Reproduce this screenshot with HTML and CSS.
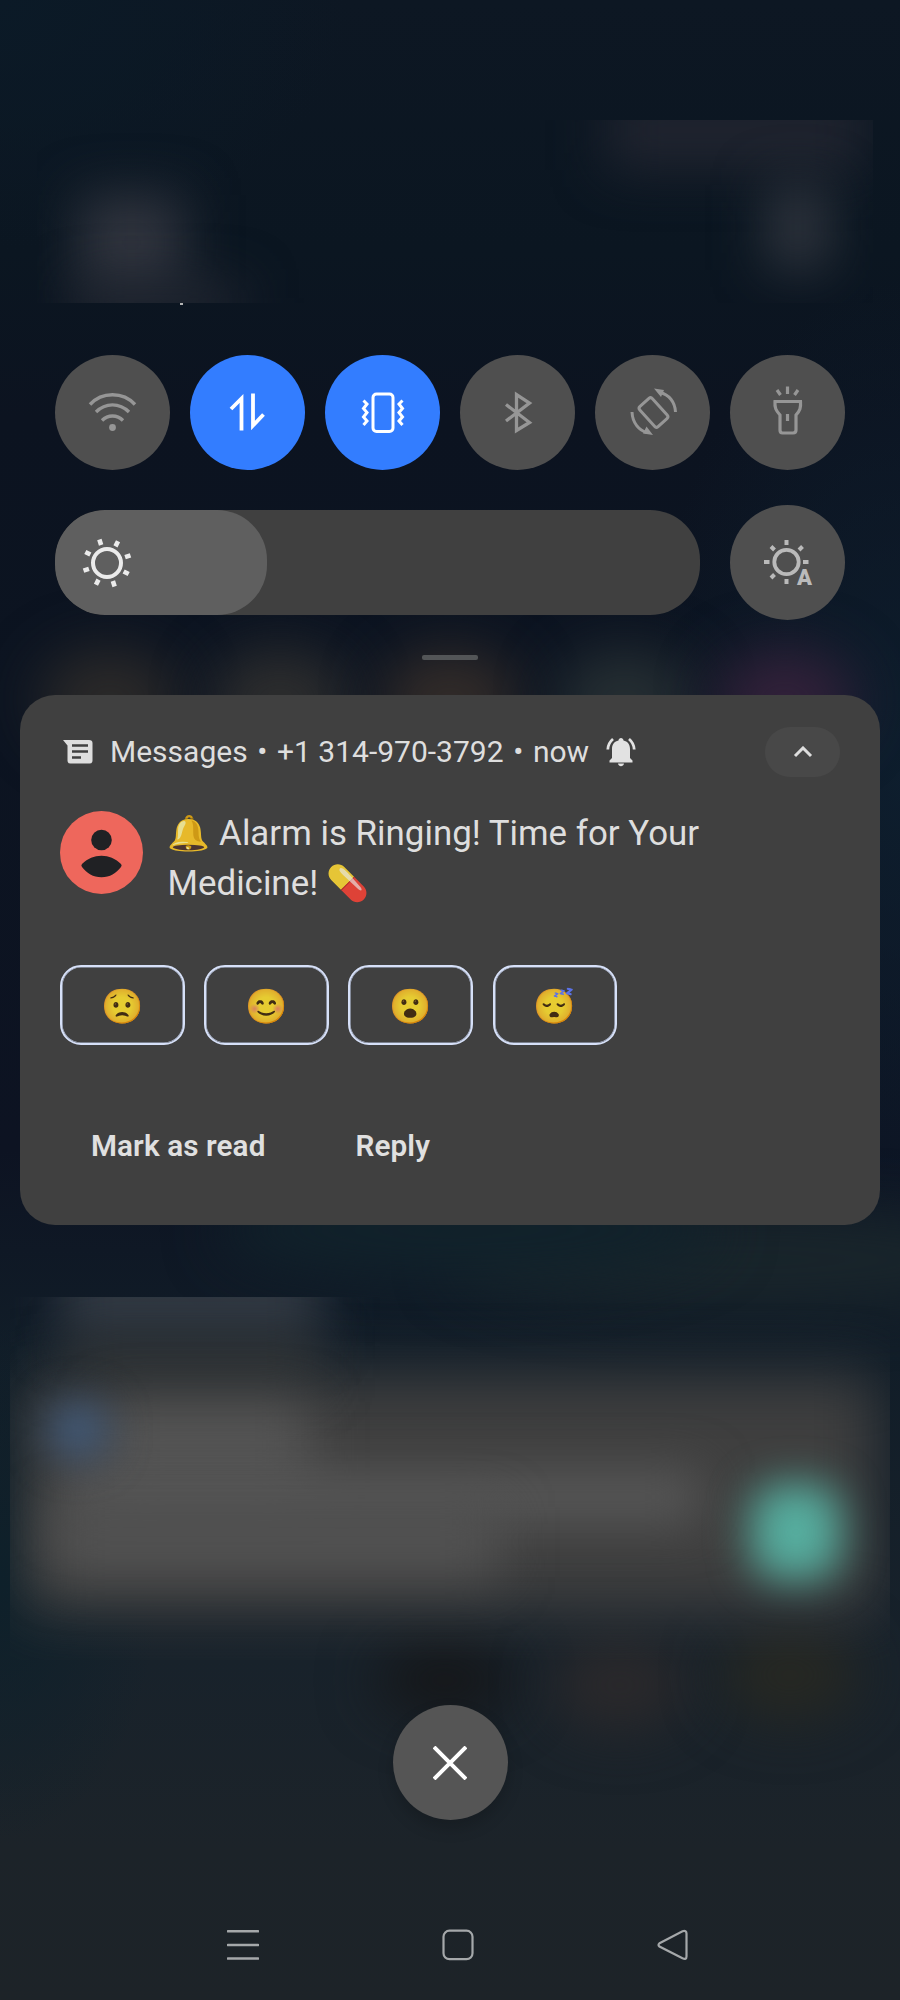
FILE: index.html
```html
<!DOCTYPE html>
<html lang="en">
<head>
<meta charset="utf-8">
<title>Notification shade</title>
<link rel="stylesheet" href="styles.css">
</head>
<body>
<div class="wallpaper">
  <i class="glow glow-a"></i><i class="glow glow-b"></i><i class="glow glow-c"></i><i class="glow glow-d"></i><i class="glow glow-e"></i>
  <i class="glow glow-f"></i><i class="glow glow-g"></i><i class="glow glow-h"></i><i class="glow glow-i"></i><i class="glow glow-j"></i>
  <div class="haze haze-top"><i class="clock"></i><i class="date"></i><i class="status"></i><i class="gear"></i></div>
  <i class="speck"></i>
  <div class="haze haze-bottom">
    <i class="sheet"></i><i class="heading"></i><i class="dim"></i><i class="app"></i><i class="title"></i><i class="line-one"></i><i class="line-two"></i><i class="teal"></i>
  </div>
</div>
<main class="screen">
  <section class="tiles">
    <div class="tile"><svg viewBox="0 0 115 115" fill="none" stroke="#969696" stroke-width="3.4"><path d="M35 49.5C47 36.5 68 36.5 80 49.5M41 57C50.500 47.500 64.500 47.500 74 57M47 65.500C53 59.500 62 59.500 68 65.500"/><circle cx="57.500" cy="72.500" r="3.400" fill="#969696" stroke="none"/></svg></div>
    <div class="tile on"><svg viewBox="0 0 115 115" fill="none" stroke="#fff" stroke-width="3.8"><path d="M41 54L51.500 43.500V75.500M63 38.500V70.500L73.500 59.500"/></svg></div>
    <div class="tile on"><svg viewBox="0 0 115 115" fill="none" stroke="#fff" stroke-width="3"><rect x="48" y="39" width="20" height="37.500" rx="3.500"/><path d="M38.500 45.500L42 49L38.500 53.500L42 57.500L38.500 62L42 66L38.500 70M77.500 45.500L74 49L77.500 53.500L74 57.500L77.500 62L74 66L77.500 70"/></svg></div>
    <div class="tile"><svg viewBox="0 0 115 115" fill="none" stroke="#969696" stroke-width="3.300"><path d="M46 49.500L69.500 67.500L56.500 75.500V39.500L69.500 48L46 66"/></svg></div>
    <div class="tile"><svg viewBox="0 0 115 115" fill="none" stroke="#969696" stroke-width="3"><rect x="50" y="44" width="17" height="27" rx="2.500" transform="rotate(-42 58.500 57.500)"/><path d="M65 37.500C74 39.500 80 47 80.500 57M37 57C37.500 68 44 75.500 52 77.500"/><path d="M59 33.500L69 35L66 42ZM58 80L48 78.500L51.500 71.500Z" fill="#969696" stroke="none"/></svg></div>
    <div class="tile"><svg viewBox="0 0 115 115" fill="none" stroke="#969696" stroke-width="3.200"><path d="M45 46.500H70.500C71 53 70 55.500 66 60V75Q66 78 63 78H52.500Q50 78 50 75V60C46 55.500 44.500 53 45 46.500ZM57.500 59V66M57.500 31.500V39M47 35L50.500 40M68 35L64.500 40"/></svg></div>
  </section>
  <section class="brightness">
    <div class="slider"><div class="level">
      <svg viewBox="0 0 50 50" fill="none" stroke="#ebebeb"><circle cx="25" cy="25" r="14" stroke-width="4"/><g stroke-width="4.600" transform="rotate(-18 25 25)"><path d="M25 .3V6M25 44V49.700M.3 25H6M44 25H49.700M7.800 7.800L11.800 11.800M38.200 38.200L42.200 42.200M7.800 42.200L11.800 38.200M38.200 11.800L42.200 7.800"/></g></svg>
    </div></div>
    <div class="tile"><svg viewBox="0 0 115 115" fill="none" stroke="#bababa"><circle cx="56.500" cy="57" r="12.200" stroke-width="3.800"/><path stroke-width="4" d="M56.500 35V40M56.500 74V79M34 57H39.500M73 57H78.500M41 41.500L44.500 45M72.500 41.500L69 45M41 73L44.500 69.500"/></svg><span class="auto">A</span></div>
  </section>
  <div class="handle"></div>
  <article class="card">
    <header class="card-head">
      <svg class="app-icon" viewBox="0 0 30 24"><path d="M0 0H26Q29.500 0 29.500 3V20.500Q29.500 23.500 26.500 23.500H7.500Q4.500 23.500 4.500 20.500V5.500Z" fill="#dedede"/><path d="M9 5.500H25M9 11.500H25M9 17.500H18" stroke="#404040" stroke-width="2.400"/></svg>
      <span class="meta">Messages <span class="dot">•</span> +1 314-970-3792 <span class="dot">•</span> now</span>
      <svg class="bell" viewBox="0 0 30 30"><path d="M3.500 23.500L6 21V12C6 7 8.500 4.500 12.500 3.500C12.500 0 17.500 0 17.500 3.500C21.500 4.500 24 7 24 12V21L26.500 23.500V25.500H3.500ZM12 26.500H18C17.500 30 12.500 30 12 26.500Z" fill="#e2e2e2"/><path d="M1.800 12.500C2 8 4 4.500 7 2M28.200 12.500C28 8 26 4.500 23 2" fill="none" stroke="#e2e2e2" stroke-width="2.800"/></svg>
      <span class="collapse"><svg viewBox="0 0 20 12" fill="none" stroke="#dedede" stroke-width="3"><path d="M2 10L10 2L18 10"/></svg></span>
    </header>
    <div class="message">
      <svg class="avatar" viewBox="0 0 83 83"><circle cx="41.500" cy="41.500" r="41.500" fill="#ee675c"/><circle cx="41.500" cy="29" r="10.300" fill="#202124"/><path d="M22 53C28 47.500 34 44.800 41.500 44.800S55 47.500 61 53Q62.300 54.500 61 56C56 62.500 50 66.300 41.500 66.300S27 62.500 22 56Q20.700 54.500 22 53Z" fill="#202124"/></svg>
      <p class="text"><span class="emoji">🔔</span> Alarm is Ringing! Time for Your<br>Medicine! <span class="emoji">💊</span></p>
    </div>
    <div class="chips"><span class="chip"><span class="emoji">😟</span></span><span class="chip"><span class="emoji">😊</span></span><span class="chip"><span class="emoji">😮</span></span><span class="chip"><span class="emoji">😴</span></span></div>
    <div class="actions"><span>Mark as read</span><span>Reply</span></div>
  </article>
  <div class="close"><svg viewBox="0 0 34 34" stroke="#fff" stroke-width="4"><path d="M1 1L33 33M33 1L1 33"/></svg></div>
  <nav class="nav">
    <svg viewBox="0 0 32 32" fill="none" stroke="#a5a8aa" stroke-width="2.600"><path d="M1 2.300H31M1 16H31M1 29.500H31" stroke-linecap="round"/></svg>
    <svg viewBox="0 0 32 32" fill="none" stroke="#a5a8aa" stroke-width="2.200"><rect x="1.500" y="1.700" width="29" height="28.500" rx="6"/></svg>
    <svg viewBox="0 0 32 32" fill="none" stroke="#a5a8aa" stroke-width="2.200"><path d="M2.500 14.200L25.500 2.200Q29.500 1 29.500 4.500V27.500Q29.500 31 25.500 29.300L2.500 17.600Q.5 16 2.500 14.200Z"/></svg>
  </nav>
</main>
</body>
</html>
```
FILE: styles.css
```css
* { box-sizing: border-box; }
body { margin: 0; width: 900px; height: 2000px; position: relative; overflow: hidden; background: #0c1420; color: #dedede; font-family: Roboto, "Noto Sans", sans-serif; }
svg { display: block; }

/* blurred home screen behind the shade */
.wallpaper { position: absolute; inset: 0; overflow: hidden; background:
  radial-gradient(ellipse 350px 250px at 0 0, #0b1a27, transparent),
  radial-gradient(ellipse 260px 500px at 900px 780px, rgba(14,32,48,.8), transparent),
  radial-gradient(ellipse 160px 260px at 0 1580px, #0e202a, transparent),
  linear-gradient(180deg, #0d1723 0, #0b1621 250px, #0c1320 420px, #0c1421 700px, #0d1322 1150px, #111d28 1350px, #18222b 1660px, #1c2329 1850px, #1d2328 2000px); }
.wallpaper i { position: absolute; display: block; }
.glow { width: 140px; height: 100px; top: 650px; border-radius: 50%; filter: blur(28px); }
.glow-a { left: 40px; background: #2c2a29; }
.glow-b { left: 210px; background: #2e2e2e; }
.glow-c { left: 380px; background: #332c29; }
.glow-d { left: 555px; background: #262f33; }
.glow-e { left: 715px; background: #33213a; }
.glow-f { left: 375px; top: 1645px; height: 70px; background: #151618; }
.glow-g { left: 550px; top: 1640px; height: 90px; background: #2b292b; }
.glow-h { left: 720px; top: 1630px; height: 90px; background: #272822; }
.glow-i { left: 450px; top: 1210px; width: 600px; background: #19252b; }
.glow-j { left: 220px; top: 1180px; width: 500px; background: #11222b; }
.haze { position: absolute; overflow: hidden; }
.haze-top { left: 37px; top: 120px; width: 836px; height: 183px; }
.haze-top i { filter: blur(26px); background: #30343e; }
.haze-top .clock { left: 42px; top: 75px; width: 105px; height: 95px; }
.haze-top .date { left: 35px; top: 165px; width: 170px; height: 35px; background: #262a34; }
.haze-top .status { left: 570px; top: -30px; width: 260px; height: 80px; background: #20242f; }
.haze-top .gear { left: 730px; top: 65px; width: 62px; height: 85px; background: #2f343d; }
.wallpaper .speck { left: 180px; top: 303px; width: 3px; height: 2px; background: #b4b4b4; }
.haze-bottom { left: 10px; top: 1297px; width: 880px; height: 363px; }
.haze-bottom i { filter: blur(25px); }
.haze-bottom .sheet { left: 12px; top: 78px; width: 856px; height: 238px; background: #3f3f3f; filter: blur(30px); }
.haze-bottom .heading { left: 50px; top: -40px; width: 260px; height: 85px; background: #313943; }
.haze-bottom .dim { left: 60px; top: 45px; width: 250px; height: 40px; background: #343636; }
.haze-bottom .title { left: 95px; top: 105px; width: 205px; height: 85px; background: #545454; }
.haze-bottom .line-one { left: 50px; top: 175px; width: 640px; height: 50px; background: #595959; }
.haze-bottom .line-two { left: 40px; top: 210px; width: 450px; height: 70px; background: #525252; }
.haze-bottom .app { left: 38px; top: 104px; width: 60px; height: 58px; border-radius: 50%; background: #415b7c; filter: blur(20px); z-index: 1; }
.haze-bottom .teal { left: 741px; top: 187px; width: 90px; height: 96px; border-radius: 30px; background: #56ae9f; filter: blur(21px); }

.screen { position: relative; height: 2000px; padding: 355px 20px 0; display: flex; flex-direction: column; }
.tiles, .brightness { display: flex; padding: 0 35px; justify-content: space-between; align-items: center; }
.tile { position: relative; width: 115px; height: 115px; border-radius: 50%; background: #4f4f4f; flex: none; }
.tile.on { background: #337dff; }
.auto { position: absolute; left: 67px; top: 61.500px; font: 900 22px/22px Roboto, sans-serif; color: #bababa; }
.brightness { margin-top: 35px; }
.slider { width: 645px; height: 105px; border-radius: 50px; background: #404040; overflow: hidden; }
.level { width: 212px; height: 105px; border-radius: 50px; background: #5f5f5f; padding: 27.500px; }
.level svg { width: 50px; height: 50px; margin-left: -.500px; overflow: visible; }
.handle { width: 56px; height: 5px; border-radius: 2px; background: #535557; margin: 35px auto; flex: none; }
.card { height: 530px; border-radius: 35px; background: #404040; padding: 32px 40px 0; flex: none; }
.card-head { display: flex; align-items: center; height: 50px; }
.app-icon { width: 30px; height: 24px; margin: 0 17px 0 3px; }
.meta { font-size: 30px; line-height: 50px; white-space: nowrap; }
.dot { margin: 0 2.200px; }
.bell { width: 30px; height: 30px; margin-left: 17px; }
.collapse { width: 75px; height: 50px; border-radius: 25px; background: #484848; margin-left: auto; display: grid; place-items: center; }
.collapse svg { width: 20px; height: 12px; }
.message { display: flex; margin-top: 34px; height: 98px; }
.avatar { width: 83px; height: 83px; flex: none; }
.text { margin: -2px 0 0 24.500px; font-size: 34.900px; line-height: 50px; white-space: nowrap; }
.emoji { font-family: "Noto Color Emoji", sans-serif; opacity: .88; }
.text .emoji { display: inline-block; font-size: 34.500px; line-height: 40px; }
.chips { display: flex; gap: 19.700px; margin-top: 56px; }
.chip { width: 124.500px; height: 80px; border: 2px solid #d6e0f8; box-shadow: inset 0 0 0 .6px #b4bfd9; border-radius: 21px; display: grid; place-items: center; font-size: 34px; line-height: 40px; }
.chip .emoji { position: relative; top: 1px; }
.actions { display: flex; gap: 90px; margin: 79px 0 0 31px; font-size: 29.700px; line-height: 44px; font-weight: 600; letter-spacing: .1px; color: #e0e0e0; }
.close { width: 115px; height: 115px; border-radius: 50%; background: #555; margin: 480px auto 0; display: grid; place-items: center; box-shadow: 0 8px 16px rgba(0,0,0,.18); flex: none; }
.close svg { width: 34px; height: 34px; }
.nav { display: flex; justify-content: space-between; margin-top: 109px; padding: 0 191.500px 0 206.500px; }
.nav svg { width: 32px; height: 32px; }
```
